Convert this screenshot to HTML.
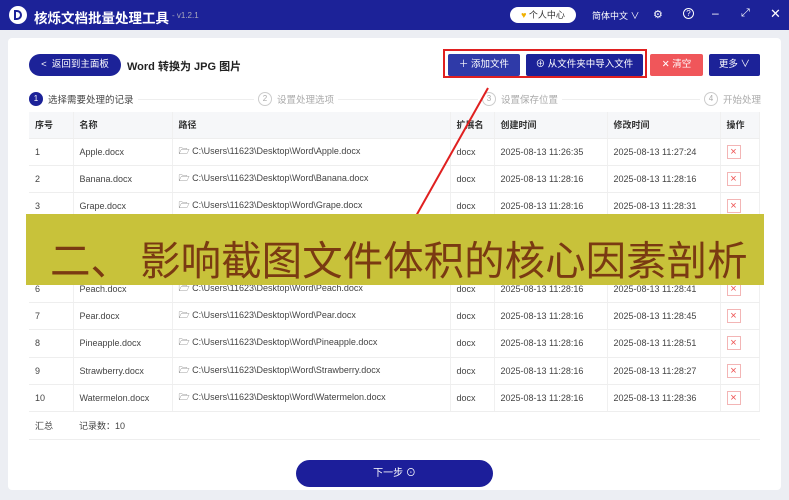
<!DOCTYPE html>
<html><head><meta charset="utf-8"><style>
*{box-sizing:border-box;margin:0;padding:0}
body{width:789px;height:500px;overflow:hidden;background:#eceef3;font-family:"Liberation Sans","Noto Sans CJK SC",sans-serif;position:relative;font-size:9px;color:#333}
.tb{position:absolute;left:0;top:0;width:789px;height:30px;background:#1c2298;color:#fff}
.abs{position:absolute}
.panel{position:absolute;left:8px;top:38px;width:773px;height:452px;background:#fff;border-radius:4px}
.btn{position:absolute;height:22px;color:#fff;font-size:9.5px;line-height:22px;text-align:center;border-radius:2px}
table{position:absolute;left:29px;top:112px;width:731px;border-collapse:collapse;font-size:9px;color:#444}
td{height:27.4px;border-bottom:1px solid #eee;border-right:1px solid #f0f0f0;padding-left:6px;white-space:nowrap}
tr.h td{height:26px;background:#f6f7f9;font-weight:bold;color:#333}
.x{display:inline-block;width:14px;height:14px;border:1px solid #f3b5b5;color:#e55;text-align:center;line-height:12px;font-size:11px}
.step{position:absolute;top:92px;font-size:9.5px;color:#aaa;display:flex;align-items:center}
.c{display:inline-block;width:14px;height:14px;border-radius:50%;border:1px solid #ccc;text-align:center;line-height:12px;font-size:8px;margin-right:5px}
</style></head><body>
<div class="tb">
 <div class="abs" style="left:9px;top:6px;width:18px;height:18px;border-radius:50%;background:#fff"><div class="abs" style="left:5px;top:4px;width:8px;height:10px;border:2.5px solid #1c2298;border-radius:0 5px 5px 0"></div></div>
 <div class="abs" style="left:34px;top:7px;font-size:13.5px;font-weight:bold">核烁文档批量处理工具</div>
 <div class="abs" style="left:172px;top:11px;font-size:8px;color:#aab">- v1.2.1</div>
 <div class="abs" style="left:510px;top:7px;width:66px;height:16px;border-radius:8px;background:#fff;color:#333;font-size:9px;line-height:16px;text-align:center"><span style="color:#f0b000">♥</span> 个人中心</div>
 <div class="abs" style="left:592px;top:9px;font-size:9px">简体中文 ∨</div>
 <div class="abs" style="left:653px;top:8px;font-size:11px">⚙</div>
 <div class="abs" style="left:683px;top:8px;width:11px;height:11px;border:1px solid #fff;border-radius:50%;font-size:8px;text-align:center;line-height:9px">?</div>
 <div class="abs" style="left:712px;top:6px;font-size:12px">–</div>
 <div class="abs" style="left:741px;top:7px;font-size:11px">⤢</div>
 <div class="abs" style="left:770px;top:6px;font-size:13px">✕</div>
</div>
<div class="panel"></div>
<div class="btn" style="left:29px;top:54px;width:92px;border-radius:11px;background:#1c2298">&lt;&nbsp; 返回到主面板</div>
<div class="abs" style="left:127px;top:58px;font-size:11px;font-weight:bold;color:#222">Word 转换为 JPG 图片</div>
<div class="abs" style="left:443px;top:49px;width:204px;height:29px;border:2px solid #e02020"></div>
<div class="btn" style="left:448px;top:54px;width:72px;background:#2f3aa8">＋ 添加文件</div>
<div class="btn" style="left:526px;top:54px;width:117px;background:#1c2298">⊕ 从文件夹中导入文件</div>
<div class="btn" style="left:650px;top:54px;width:53px;background:#f0565a">✕ 清空</div>
<div class="btn" style="left:709px;top:54px;width:51px;background:#1c2298">更多 ∨</div>
<div class="abs" style="left:29px;top:99px;width:731px;height:1px;background:#eee"></div>
<div class="step" style="left:29px;color:#444;background:#fff;padding-right:4px"><span class="c" style="background:#1c2298;border-color:#1c2298;color:#fff">1</span>选择需要处理的记录</div>
<div class="step" style="left:254px;background:#fff;padding:0 4px"><span class="c">2</span>设置处理选项</div>
<div class="step" style="left:478px;background:#fff;padding:0 4px"><span class="c">3</span>设置保存位置</div>
<div class="step" style="left:700px;background:#fff;padding-left:4px"><span class="c">4</span>开始处理</div>
<table>
<tr class="h"><td style="width:44px">序号</td><td style="width:99px">名称</td><td style="width:278px">路径</td><td style="width:44px">扩展名</td><td style="width:113px">创建时间</td><td style="width:113px">修改时间</td><td>操作</td></tr>
<tr><td>1</td><td>Apple.docx</td><td>🗁 C:\Users\11623\Desktop\Word\Apple.docx</td><td>docx</td><td>2025-08-13 11:26:35</td><td>2025-08-13 11:27:24</td><td><span class="x">×</span></td></tr>
<tr><td>2</td><td>Banana.docx</td><td>🗁 C:\Users\11623\Desktop\Word\Banana.docx</td><td>docx</td><td>2025-08-13 11:28:16</td><td>2025-08-13 11:28:16</td><td><span class="x">×</span></td></tr>
<tr><td>3</td><td>Grape.docx</td><td>🗁 C:\Users\11623\Desktop\Word\Grape.docx</td><td>docx</td><td>2025-08-13 11:28:16</td><td>2025-08-13 11:28:31</td><td><span class="x">×</span></td></tr>
<tr><td>4</td><td>Lemon.docx</td><td>🗁 C:\Users\11623\Desktop\Word\Lemon.docx</td><td>docx</td><td>2025-08-13 11:28:16</td><td>2025-08-13 11:28:35</td><td><span class="x">×</span></td></tr>
<tr><td>5</td><td>Orange.docx</td><td>🗁 C:\Users\11623\Desktop\Word\Orange.docx</td><td>docx</td><td>2025-08-13 11:28:16</td><td>2025-08-13 11:28:38</td><td><span class="x">×</span></td></tr>
<tr><td>6</td><td>Peach.docx</td><td>🗁 C:\Users\11623\Desktop\Word\Peach.docx</td><td>docx</td><td>2025-08-13 11:28:16</td><td>2025-08-13 11:28:41</td><td><span class="x">×</span></td></tr>
<tr><td>7</td><td>Pear.docx</td><td>🗁 C:\Users\11623\Desktop\Word\Pear.docx</td><td>docx</td><td>2025-08-13 11:28:16</td><td>2025-08-13 11:28:45</td><td><span class="x">×</span></td></tr>
<tr><td>8</td><td>Pineapple.docx</td><td>🗁 C:\Users\11623\Desktop\Word\Pineapple.docx</td><td>docx</td><td>2025-08-13 11:28:16</td><td>2025-08-13 11:28:51</td><td><span class="x">×</span></td></tr>
<tr><td>9</td><td>Strawberry.docx</td><td>🗁 C:\Users\11623\Desktop\Word\Strawberry.docx</td><td>docx</td><td>2025-08-13 11:28:16</td><td>2025-08-13 11:28:27</td><td><span class="x">×</span></td></tr>
<tr><td>10</td><td>Watermelon.docx</td><td>🗁 C:\Users\11623\Desktop\Word\Watermelon.docx</td><td>docx</td><td>2025-08-13 11:28:16</td><td>2025-08-13 11:28:36</td><td><span class="x">×</span></td></tr>
<tr><td style="border-right:none">汇总</td><td colspan="6" style="border-right:none">记录数：10</td></tr>
</table>
<svg class="abs" style="left:0;top:0" width="789" height="500"><line x1="488" y1="88" x2="416" y2="216" stroke="#e02020" stroke-width="2"/></svg>
<div class="abs" style="left:26px;top:214px;width:738px;height:71px;background:#c8c23a;color:#7a3a12;font-size:40.5px;line-height:40px;padding:24px 0 0 24px;font-family:'Noto Sans CJK SC',sans-serif;white-space:nowrap;overflow:hidden">二、 影响截图文件体积的核心因素剖析</div>
<div class="btn" style="left:296px;top:460px;width:197px;height:27px;line-height:27px;border-radius:14px;background:#1c1e9a;font-size:10px">下一步 ⊙</div>
</body></html>
